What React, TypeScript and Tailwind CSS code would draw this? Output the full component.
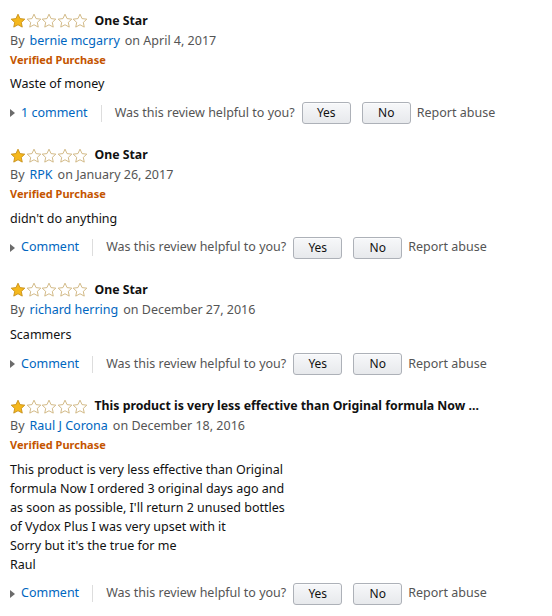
import React from 'react';

type Review = {
  title: string;
  author: string;
  date: string;
  verified: boolean;
  body: string[];
  comment: string;
};

const reviews: Review[] = [
  {
    title: 'One Star',
    author: 'bernie mcgarry',
    date: 'April 4, 2017',
    verified: true,
    body: ['Waste of money'],
    comment: '1 comment',
  },
  {
    title: 'One Star',
    author: 'RPK',
    date: 'January 26, 2017',
    verified: true,
    body: ["didn't do anything"],
    comment: 'Comment',
  },
  {
    title: 'One Star',
    author: 'richard herring',
    date: 'December 27, 2016',
    verified: false,
    body: ['Scammers'],
    comment: 'Comment',
  },
  {
    title: 'This product is very less effective than Original formula Now ...',
    author: 'Raul J Corona',
    date: 'December 18, 2016',
    verified: true,
    body: [
      'This product is very less effective than Original',
      'formula Now I ordered 3 original days ago and',
      "as soon as possible, I'll return 2 unused bottles",
      'of Vydox Plus I was very upset with it',
      "Sorry but it's the true for me",
      'Raul',
    ],
    comment: 'Comment',
  },
];

const STAR = 'M8 1.2l2.05 4.4 4.75.55-3.5 3.25.95 4.7L8 11.75 3.75 14.1l.95-4.7L1.2 6.15l4.75-.55z';

const Stars: React.FC = () => (
  <div className="flex items-center">
    {[0, 1, 2, 3, 4].map((i) => (
      <svg key={i} width="16" height="16" viewBox="0 0 16 16" className="-mr-[0.5px]">
        <path
          d={STAR}
          fill={i === 0 ? '#f5b81d' : 'none'}
          stroke={i === 0 ? '#c7901a' : '#cdb27a'}
          strokeWidth="0.9"
          strokeLinejoin="round"
        />
      </svg>
    ))}
  </div>
);

const Btn: React.FC<{ label: string }> = ({ label }) => (
  <button className="w-[49px] h-[22px] rounded-[3px] border border-[#adb1b8] bg-gradient-to-b from-[#f7f8fa] to-[#e7e9ec] text-[12px] text-[#111] leading-none shadow-[0_1px_0_rgba(255,255,255,0.6)_inset]">
    {label}
  </button>
);

const ReviewItem: React.FC<{ r: Review }> = ({ r }) => (
  <div className="flex flex-col">
    <div className="flex items-center h-5 gap-[7px]">
      <Stars />
      <span className="font-bold text-[12.3px] text-[#111]">{r.title}</span>
    </div>
    <div className="h-5 flex items-center text-[12.5px] text-[#555]">
      <span>By</span>
      <span className="text-[#0066c0] ml-[5px]">{r.author}</span>
      <span className="ml-[5px]">on {r.date}</span>
    </div>
    {r.verified && (
      <div className="h-[18px] flex items-center text-[11px] font-bold text-[#c45500]">
        Verified Purchase
      </div>
    )}
    <div className="mt-[5px] text-[12.5px] leading-[19px] text-[#111]">
      {r.body.map((line, i) => (
        <div key={i}>{line}</div>
      ))}
    </div>
    <div className="mt-[9px] h-[22px] flex items-center text-[12.5px]">
      <svg width="5" height="8" viewBox="0 0 5 8" className="mr-[6px]">
        <path d="M0 0l5 4-5 4z" fill="#6b6b6b" />
      </svg>
      <span className="text-[#0066c0]">{r.comment}</span>
      <span className="w-px h-[17px] bg-[#ddd] mx-[13px]" />
      <span className="text-[#555]">Was this review helpful to you?</span>
      <div className="ml-[7px] flex items-center gap-[11px]">
        <Btn label="Yes" />
        <Btn label="No" />
      </div>
      <span className="ml-[6px] text-[#555]">Report abuse</span>
    </div>
  </div>
);

export default function App() {
  return (
    <div
      className="w-[552px] h-[616px] bg-white pl-[10px] pt-[11px] flex flex-col gap-[21.5px] overflow-hidden"
      style={{ fontFamily: '"Noto Sans", "Open Sans", sans-serif' }}
    >
      {reviews.map((r, i) => (
        <ReviewItem key={i} r={r} />
      ))}
    </div>
  );
}
